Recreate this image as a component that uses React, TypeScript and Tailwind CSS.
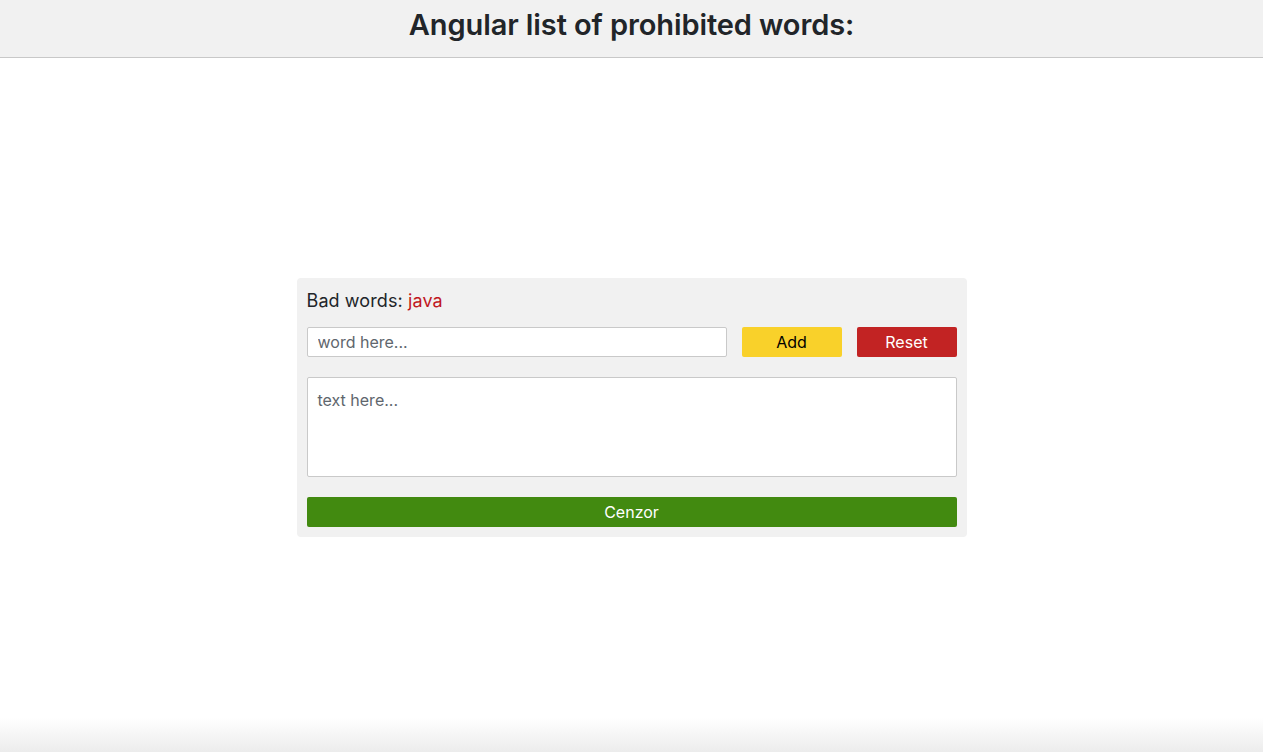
import React, { useState } from "react";

export default function App() {
    const [word, setWord] = useState("");
    const [text, setText] = useState("");
    const [badWords, setBadWords] = useState<string[]>(["java"]);

    return (
        <div
            className="flex flex-col h-[752px] bg-white text-[#212529]"
            style={{ fontFamily: "Inter, 'Liberation Sans', sans-serif" }}
        >
            <header className="h-[58px] shrink-0 bg-[#f1f1f1] border-b border-[#c8c8c8] flex items-center justify-center pb-[9px]">
                <h1 className="text-[29px] font-semibold tracking-[-0.1px] leading-none">
                    Angular list of prohibited words:
                </h1>
            </header>

            <main className="flex-1 flex justify-center pt-[220px]">
                <div className="w-[670px] h-fit bg-[#f1f1f1] rounded-[4px] p-[10px] flex flex-col">
                    <p className="text-[18px] leading-[24px] mt-[1px] tracking-[0.1px]">
                        Bad words:{" "}
                        <span className="text-[#c0181f]">{badWords.join(", ")}</span>
                    </p>
                    <div className="flex mt-[14px] gap-[15px]">
                        <input
                            value={word}
                            onChange={(e) => setWord(e.target.value)}
                            placeholder="word here..."
                            className="w-[420px] h-[30px] bg-white border border-[#c9c9c9] rounded-[2px] px-[10px] text-[16px] placeholder:text-[#60666d] outline-none"
                        />
                        <button
                            onClick={() => word && setBadWords([...badWords, word])}
                            className="w-[100px] h-[30px] bg-[#f9d12a] rounded-[2px] text-[16px] text-black"
                        >
                            Add
                        </button>
                        <button
                            onClick={() => setBadWords([])}
                            className="w-[100px] h-[30px] bg-[#c22323] rounded-[2px] text-[16px] text-white"
                        >
                            Reset
                        </button>
                    </div>
                    <textarea
                        value={text}
                        onChange={(e) => setText(e.target.value)}
                        placeholder="text here..."
                        className="mt-[20px] w-full h-[100px] bg-white border border-[#c9c9c9] rounded-[2px] px-[10px] py-[11px] text-[16px] leading-[22px] placeholder:text-[#60666d] resize-none outline-none"
                    />
                    <button className="mt-[20px] w-full h-[30px] bg-[#428a10] rounded-[2px] text-[16px] text-white">
                        Cenzor
                    </button>
                </div>
            </main>

            <div className="h-[34px] shrink-0 bg-gradient-to-b from-white to-[#ececec]" />
        </div>
    );
}
